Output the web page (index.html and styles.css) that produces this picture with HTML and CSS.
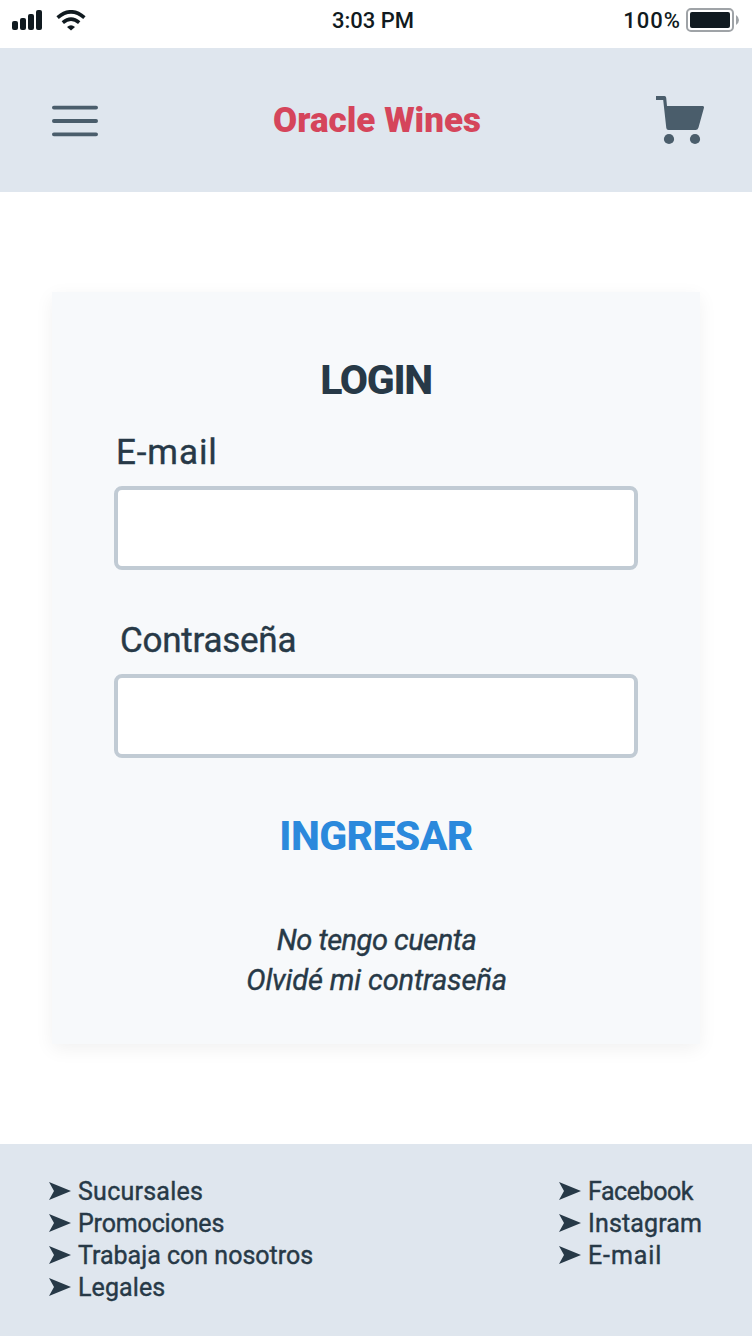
FILE: index.html
```html
<!DOCTYPE html>
<html lang="es">
<head>
<meta charset="utf-8">
<title>Oracle Wines</title>
<link rel="stylesheet" href="styles.css">
</head>
<body>
<div class="screen">
  <div class="status">
    <div class="status-left">
      <svg class="signal" width="32" height="22" viewBox="0 0 32 22" fill="#101a20"><rect x="0" y="11" width="6" height="9" rx="2"/><rect x="8" y="8" width="6" height="12" rx="2"/><rect x="16" y="4" width="6" height="16" rx="2"/><rect x="24" y="0" width="6" height="20" rx="2"/></svg>
      <svg class="wifi" width="30" height="22" viewBox="0 0 30 22" fill="none" stroke="#101a20" stroke-width="3.6"><path d="M1.6 7.6Q15-4 28.4 7.6M6.800 12.600Q15 5.800 23.200 12.600"/><path d="M11 17Q15 13.400 19 17L15 20.400Z" fill="#101a20" stroke="none"/></svg>
    </div>
    <span class="time">3:03 PM</span>
    <div class="status-right">
      <span class="percent">100%</span>
      <svg class="battery" width="54" height="24" viewBox="0 0 54 24"><rect x="1" y="1" width="46" height="22" rx="4" fill="#fff" stroke="#9fa3a7" stroke-width="2"/><rect x="4" y="4" width="40" height="16" rx="2" fill="#101a20"/><path d="M50 7Q53 9 53 12T50 17Z" fill="#9fa3a7"/></svg>
    </div>
  </div>
  <header class="header">
    <svg class="menu" width="46" height="32" viewBox="0 0 46 32" stroke="#4a5d6b" stroke-width="3.8" stroke-linecap="round"><path d="M1.9 2.6H44.1M1.9 16H44.1M1.9 29.3H44.1"/></svg>
    <h1 class="brand">Oracle Wines</h1>
    <svg class="cart" width="48" height="50" viewBox="0 0 48 50" fill="#4a5d6b"><path d="M0 0H8.5Q10 0 10.2 1.7L11 10H46.500Q48.400 10 47.900 12L42.500 31.500Q41.800 34 39.500 34H12.500Q10.500 34 10.300 32L7.200 4H0Z"/><circle cx="13" cy="43" r="5.100"/><circle cx="39" cy="43" r="5.100"/></svg>
  </header>
  <main class="main">
    <form class="card">
      <h2 class="heading">LOGIN</h2>
      <label class="label label-email" for="email">E-mail</label>
      <input class="field" id="email" type="email">
      <label class="label label-pass" for="pass">Contraseña</label>
      <input class="field" id="pass" type="password">
      <button class="submit" type="button">INGRESAR</button>
      <a class="link link-new">No tengo cuenta</a>
      <a class="link link-forgot">Olvidé mi contraseña</a>
    </form>
  </main>
  <footer class="footer">
    <ul class="links">
      <li class="item"><svg class="arrow" width="22" height="18" viewBox="0 0 22 18"><path d="M0 0L22 9L0 18L5 9Z"/></svg><span class="sucursales">Sucursales</span></li>
      <li class="item"><svg class="arrow" width="22" height="18" viewBox="0 0 22 18"><path d="M0 0L22 9L0 18L5 9Z"/></svg><span class="promociones">Promociones</span></li>
      <li class="item"><svg class="arrow" width="22" height="18" viewBox="0 0 22 18"><path d="M0 0L22 9L0 18L5 9Z"/></svg><span class="trabaja">Trabaja con nosotros</span></li>
      <li class="item"><svg class="arrow" width="22" height="18" viewBox="0 0 22 18"><path d="M0 0L22 9L0 18L5 9Z"/></svg><span class="legales">Legales</span></li>
    </ul>
    <ul class="links links-social">
      <li class="item"><svg class="arrow" width="22" height="18" viewBox="0 0 22 18"><path d="M0 0L22 9L0 18L5 9Z"/></svg><span class="facebook">Facebook</span></li>
      <li class="item"><svg class="arrow" width="22" height="18" viewBox="0 0 22 18"><path d="M0 0L22 9L0 18L5 9Z"/></svg><span class="instagram">Instagram</span></li>
      <li class="item"><svg class="arrow" width="22" height="18" viewBox="0 0 22 18"><path d="M0 0L22 9L0 18L5 9Z"/></svg><span class="mail">E-mail</span></li>
    </ul>
  </footer>
</div>
</body>
</html>
```
FILE: styles.css
```css
* { box-sizing: border-box; }
body { margin: 0; background: #fff; color: #273947; font-family: Roboto, "Liberation Sans", sans-serif; }
svg { display: block; flex: none; }
h1, h2, ul { margin: 0; padding: 0; }
.screen { width: 752px; height: 1336px; display: flex; flex-direction: column; overflow: hidden; }

.status { height: 48px; padding: 0 14px 0 12px; display: grid; grid-template-columns: 320px auto 1fr; color: #101a20; font-size: 22px; font-weight: 500; line-height: 42px; }
.status-left { display: flex; gap: 12px; padding-top: 10px; }
.status-right { display: flex; justify-content: flex-end; gap: 5px; margin-right: -2px; }
.percent { letter-spacing: 1px; }
.battery { margin-top: 8px; }

.header { height: 144px; padding: 0 48px 0 52px; display: flex; justify-content: space-between; background: #dfe6ee; }
.menu { margin-top: 57px; }
.cart { margin-top: 48px; }
.brand { color: #d5455b; font-size: 35px; font-weight: 900; line-height: 146px; }

.main { flex: 1; padding: 100px 52px; }
.card { height: 752px; padding: 64px 62px 0; display: flex; flex-direction: column; background: #f7f9fb; box-shadow: 0 5px 18px rgba(0, 0, 0, .06); }
.heading { font-size: 41px; font-weight: 800; line-height: 48px; letter-spacing: -1.3px; text-align: center; }
.label, .link, .links { -webkit-text-stroke: .4px currentColor; }
.label { height: 44px; font-size: 35px; line-height: 46px; white-space: nowrap; }
.label-email { margin: 26px 0 12px 2px; letter-spacing: .9px; }
.label-pass { margin: 48px 0 12px 6px; letter-spacing: -.25px; }
.field { width: 524px; height: 84px; border: 4px solid #c1cbd4; border-radius: 8px; background: #fff; padding: 0 16px; font: 32px Roboto, sans-serif; outline: 0; }
.submit { margin: 54px 0 0; padding: 0; border: 0; background: none; color: #2b89dc; font: 800 41px/48px Roboto, sans-serif; letter-spacing: -.6px; }
.link { height: 40px; padding-left: 1px; font-size: 29px; font-style: italic; line-height: 40px; text-align: center; }
.link-new { margin-top: 60px; letter-spacing: -.5px; }
.link-forgot { letter-spacing: -.13px; }

.footer { height: 192px; padding: 32px 47px 0 49px; display: flex; justify-content: space-between; background: #dfe6ee; }
.links { list-style: none; font-size: 25px; line-height: 32px; }
.links-social { width: 146px; }
.item { display: flex; gap: 7px; height: 32px; white-space: nowrap; }
.arrow { margin-top: 6px; fill: #273947; }
.sucursales { letter-spacing: .25px; }
.promociones { letter-spacing: -.15px; }
.trabaja { letter-spacing: 0; }
.legales { letter-spacing: .1px; }
.facebook { letter-spacing: -.45px; }
.instagram { letter-spacing: .15px; }
.mail { letter-spacing: .9px; }
```
